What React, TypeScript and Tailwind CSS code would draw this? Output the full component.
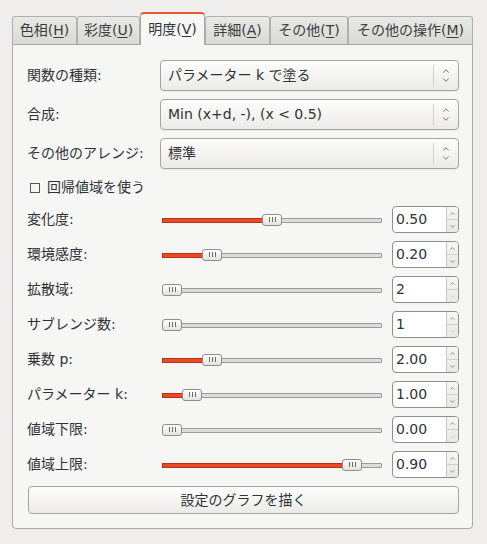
import { ChevronDown, ChevronUp } from "lucide-react";

const FONT = { fontFamily: '"DejaVu Sans", "Noto Sans CJK JP", sans-serif' };

const TABS = [
  { label: "色相", key: "H", w: 65 },
  { label: "彩度", key: "U", w: 63 },
  { label: "明度", key: "V", w: 65, active: true },
  { label: "詳細", key: "A", w: 65 },
  { label: "その他", key: "T", w: 78 },
  { label: "その他の操作", key: "M", w: 125 },
];

const COMBOS = [
  { label: "関数の種類:", value: "パラメーター k で塗る" },
  { label: "合成:", value: "Min (x+d, -), (x < 0.5)" },
  { label: "その他のアレンジ:", value: "標準" },
];

const SLIDERS = [
  { label: "変化度:", value: "0.50", pos: 0.5, downOff: false },
  { label: "環境感度:", value: "0.20", pos: 0.2, downOff: false },
  { label: "拡散域:", value: "2", pos: 0, downOff: true },
  { label: "サブレンジ数:", value: "1", pos: 0, downOff: true },
  { label: "乗数 p:", value: "2.00", pos: 0.2, downOff: false },
  { label: "パラメーター k:", value: "1.00", pos: 0.1, downOff: false },
  { label: "値域下限:", value: "0.00", pos: 0, downOff: true },
  { label: "値域上限:", value: "0.90", pos: 0.9, downOff: false },
];

function Combo({ value }: { value: string }) {
  return (
    <div className="flex h-[31px] items-center rounded-[4px] border border-[#a5a5a0] bg-gradient-to-b from-[#fdfdfc] to-[#ecebe8] shadow-[0_1px_0_rgba(0,0,0,0.05)]">
      <div className="flex-1 pl-[7px] text-[14px] text-[#2e3436]">{value}</div>
      <div className="h-[21px] w-px bg-[#d0d0cc]" />
      <div className="flex w-[24px] flex-col items-center justify-center text-[#2e3436]">
        <ChevronUp size={10} strokeWidth={1.6} className="-mb-[1px]" />
        <ChevronDown size={10} strokeWidth={1.6} />
      </div>
    </div>
  );
}

function Slider({ pos }: { pos: number }) {
  const left = Math.round(pos * 200);
  return (
    <div className="relative h-[12px] ml-[2px] w-[220px]">
      <div className="absolute left-0 right-0 top-[4px] h-[5px] rounded-[1px] border border-[#9a9a96] bg-[#dcdcd8]" />
      {left > 0 && (
        <div
          className="absolute left-0 top-[4px] h-[5px] border border-[#b3321a] bg-[#ec4a24]"
          style={{ width: left + 4 }}
        />
      )}
      <div
        className="absolute top-0 flex h-[12px] w-[20px] items-center justify-center gap-[2px] rounded-[3px] border border-[#8e8e8a] bg-gradient-to-b from-[#ffffff] to-[#e2e2de]"
        style={{ left }}
      >
        <span className="h-[5px] w-px bg-[#6a6a66]" />
        <span className="h-[5px] w-px bg-[#6a6a66]" />
        <span className="h-[5px] w-px bg-[#6a6a66]" />
      </div>
    </div>
  );
}

function Spin({ value, downOff }: { value: string; downOff: boolean }) {
  return (
    <div className="flex h-[27px] w-[67px] overflow-hidden rounded-[4px] border border-[#8f8f8b] bg-white">
      <div className="flex flex-1 items-center pl-[3px] text-[14px] text-[#2e3436]">{value}</div>
      <div className="flex w-[12px] flex-col border-l border-[#c8c8c4] bg-gradient-to-b from-[#f6f6f4] to-[#e8e8e5]">
        <div className="flex flex-1 items-center justify-center border-b border-[#cfcfcb] text-[#3a3a3a]">
          <ChevronUp size={7} strokeWidth={1.8} />
        </div>
        <div className={`flex flex-1 items-center justify-center ${downOff ? "text-[#b8b8b4]" : "text-[#3a3a3a]"}`}>
          <ChevronDown size={7} strokeWidth={1.8} />
        </div>
      </div>
    </div>
  );
}

export default function App() {
  return (
    <div style={FONT} className="h-[544px] w-[487px] bg-[#efeeec] pl-[12px] pt-[12px] text-[#2e3436]">
      {/* tabs */}
      <div className="flex h-[32px] items-end">
        {TABS.map(t =>
          t.active ? (
            <div
              key={t.key}
              style={{ width: t.w }}
              className="relative z-10 -mb-px flex h-[33px] items-center justify-center rounded-t-[4px] border-x border-t-[2px] border-[#a8a8a4] border-t-[#e8582c] bg-[#f6f6f4] pb-[1px] text-[14px]"
            >
              {t.label}(<span className="underline underline-offset-2">{t.key}</span>)
            </div>
          ) : (
            <div
              key={t.key}
              style={{ width: t.w }}
              className="flex h-[28px] items-center justify-center rounded-t-[3px] border border-b-0 border-[#b0b0ac] bg-gradient-to-b from-[#e9e9e6] to-[#d9d9d5] text-[14px] text-[#3a3d3e]"
            >
              {t.label}(<span className="underline underline-offset-2">{t.key}</span>)
            </div>
          )
        )}
      </div>

      {/* panel */}
      <div className="flex h-[485px] w-[461px] flex-col rounded-b-[4px] border border-[#a8a8a4] bg-[#f6f6f4] pl-[14px] pr-[13px] pt-[15px]">
        <div className="flex flex-col gap-[8px]">
          {COMBOS.map(c => (
            <div key={c.label} className="grid grid-cols-[133px_1fr] items-center">
              <div className="text-[14px]">{c.label}</div>
              <Combo value={c.value} />
            </div>
          ))}
        </div>

        <div className="mt-[9px] flex h-[19px] items-center pl-[3px] text-[14px]">
          <span className="mr-[7px] h-[10px] w-[10px] border border-[#555]" />
          回帰値域を使う
        </div>

        <div className="mt-[9px] flex flex-col gap-[8px]">
          {SLIDERS.map(s => (
            <div key={s.label} className="grid grid-cols-[133px_1fr_67px] items-center">
              <div className="text-[14px]">{s.label}</div>
              <Slider pos={s.pos} />
              <Spin value={s.value} downOff={s.downOff} />
            </div>
          ))}
        </div>

        <button className="mt-[8px] ml-[1px] flex h-[28px] items-center justify-center rounded-[4px] border border-[#a5a5a0] bg-gradient-to-b from-[#fdfdfc] to-[#ecebe8] text-[14px] text-[#2e3436]">
          設定のグラフを描く
        </button>
      </div>
    </div>
  );
}
